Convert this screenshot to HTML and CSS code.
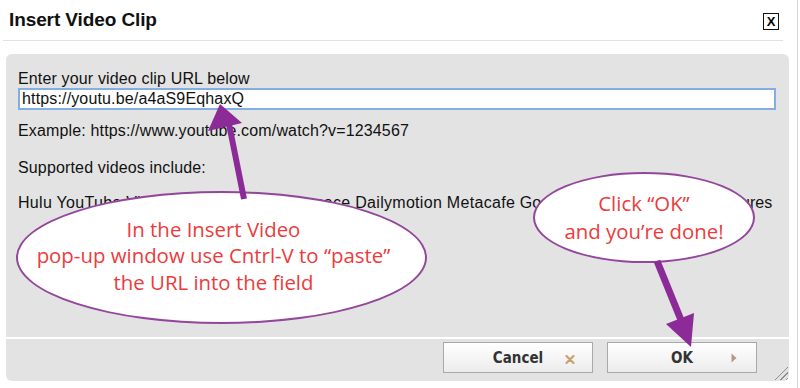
FILE: index.html
```html
<!DOCTYPE html>
<html lang="en">
<head>
<meta charset="UTF-8">
<title>Insert Video Clip</title>
<link rel="stylesheet" href="styles.css">
</head>
<body>
<div class="dialog">
    <div class="header">
        <h1 class="title">Insert Video Clip</h1>
        <span class="close">X</span>
    </div>

    <div class="panel">
        <div class="panel-body">
            <p class="label">Enter your video clip URL below</p>
            <input class="url" type="text" value="https://youtu.be/a4aS9EqhaxQ">
            <p class="example">Example: https://www.youtube.com/watch?v=1234567</p>
            <p class="supported">Supported videos include:</p>
            <p class="sites">Hulu YouTube Vimeo Blip.tv Viddler Myspace Dailymotion Metacafe <span class="sites-tail">Google Video Photobucket Pictures</span></p>
        </div>
        <div class="panel-footer">
            <button class="btn">Cancel
                <svg class="btn-icon cancel-icon" width="10" height="9" viewBox="0 0 10 9">
                    <path d="M1.5 1 L8.5 8 M8.5 1 L1.5 8" stroke="#c9a273" stroke-width="2.2" stroke-linecap="round"/>
                </svg>
            </button>
            <button class="btn">OK
                <svg class="btn-icon ok-icon" width="6" height="10" viewBox="0 0 6 10">
                    <path d="M0.5 0.5 L5.5 5 L0.5 9.5 Z" fill="#b7997b"/>
                </svg>
            </button>
            <span class="grip"></span>
        </div>
    </div>

    <!-- callouts drawn over the dialog -->
    <div class="bubble bubble-paste">
        <span>In the Insert Video</span>
        <span>pop-up window use Cntrl-V to &ldquo;paste&rdquo;</span>
        <span>the URL into the field</span>
    </div>
    <div class="bubble bubble-ok">
        <span>Click &ldquo;OK&rdquo;</span>
        <span>and you&rsquo;re done!</span>
    </div>
    <svg class="arrows" width="800" height="388" viewBox="0 0 800 388">
        <line x1="244" y1="199" x2="229" y2="124" stroke="#8c2a98" stroke-width="6"/>
        <polygon points="220,104 208,131 242,123" fill="#8c2a98"/>
        <line x1="657" y1="261" x2="681" y2="320" stroke="#8c2a98" stroke-width="7"/>
        <polygon points="691,347 666,324 694,313" fill="#8c2a98"/>
    </svg>
</div>
</body>
</html>
```

FILE: styles.css
```css
body {
    margin: 0;
    background-color: #fff;
    font-family: "Liberation Sans", Arial, sans-serif;
}

.dialog {
    position: relative;
    width: 797px;
    height: 388px;
    border-right: 1px solid #d6d6d6;
    overflow: hidden;
}

.header {
    display: flex;
    justify-content: space-between;
    align-items: center;
    height: 40px;
    margin: 0 14px 0 3px;
    padding: 0 4px 0 6px;
    border-bottom: 1px solid #e2e2e2;
}

.title {
    margin: 0;
    font-size: 19px;
    font-weight: bold;
    letter-spacing: -0.1px;
    color: #111;
}

.close {
    width: 14px;
    height: 15px;
    border: 1.5px solid #111;
    font-size: 13px;
    font-weight: bold;
    line-height: 15px;
    text-align: center;
    color: #000;
    margin-top: 2px;
}

.panel {
    margin: 13px 8px 0 6px;
    background-color: #e3e3e3;
    border-radius: 6px;
}

.panel-body {
    height: 267px;
    padding: 16px 13px 0 12px;
    font-size: 16px;
    letter-spacing: 0.15px;
    color: #111;
}

.panel-body p {
    margin: 0;
    line-height: 17px;
}

.url {
    display: block;
    box-sizing: border-box;
    width: 758px;
    height: 22px;
    margin-top: 1px;
    padding: 0 2px;
    border: 2px solid #84ade0;
    background-color: #fff;
    font-family: "Liberation Sans", Arial, sans-serif;
    font-size: 16px;
    letter-spacing: 0.15px;
    color: #111;
    outline: none;
}

.example {
    margin-top: 12px !important;
}

.supported {
    margin-top: 20px !important;
}

.sites {
    margin-top: 18px !important;
    white-space: nowrap;
    letter-spacing: 0.3px;
}

.sites-tail {
    letter-spacing: 0;
}

.panel-footer {
    position: relative;
    display: flex;
    justify-content: flex-end;
    gap: 14px;
    height: 39px;
    padding: 3px 32px 0 0;
    border-top: 2px solid #fff;
}

.btn {
    position: relative;
    width: 150px;
    height: 31px;
    border: 1px solid #a9a9a9;
    background: linear-gradient(#ffffff, #ececec);
    font-family: "DejaVu Sans Condensed", "DejaVu Sans", sans-serif;
    font-size: 15px;
    font-weight: bold;
    color: #333;
    padding: 0;
}

.btn-icon {
    position: absolute;
    top: 12px;
}

.cancel-icon {
    right: 17px;
}

.ok-icon {
    right: 19px;
    top: 10px;
}

.grip {
    position: absolute;
    right: 1px;
    bottom: 1px;
    width: 14px;
    height: 14px;
    background: repeating-linear-gradient(135deg, transparent 0 2px, #8e8e8e 2px 3px, transparent 3px 4px);
    clip-path: polygon(100% 0, 100% 100%, 0 100%);
}

.bubble {
    position: absolute;
    box-sizing: border-box;
    display: flex;
    flex-direction: column;
    align-items: center;
    justify-content: center;
    background-color: #fff;
    border: 2px solid #93469c;
    border-radius: 50%;
    font-family: "Open Sans", "Noto Sans", sans-serif;
    font-size: 20.4px;
    color: #ec3b3b;
    line-height: 26.5px;
    white-space: nowrap;
}

.bubble-paste {
    left: 16px;
    top: 191px;
    width: 411px;
    height: 133px;
    padding: 0 16px 4px 0;
}

.bubble-ok {
    left: 533px;
    top: 172px;
    width: 222px;
    height: 91px;
    line-height: 28px;
    padding-bottom: 2px;
}

.arrows {
    position: absolute;
    top: 0;
    left: 0;
    pointer-events: none;
}
```
